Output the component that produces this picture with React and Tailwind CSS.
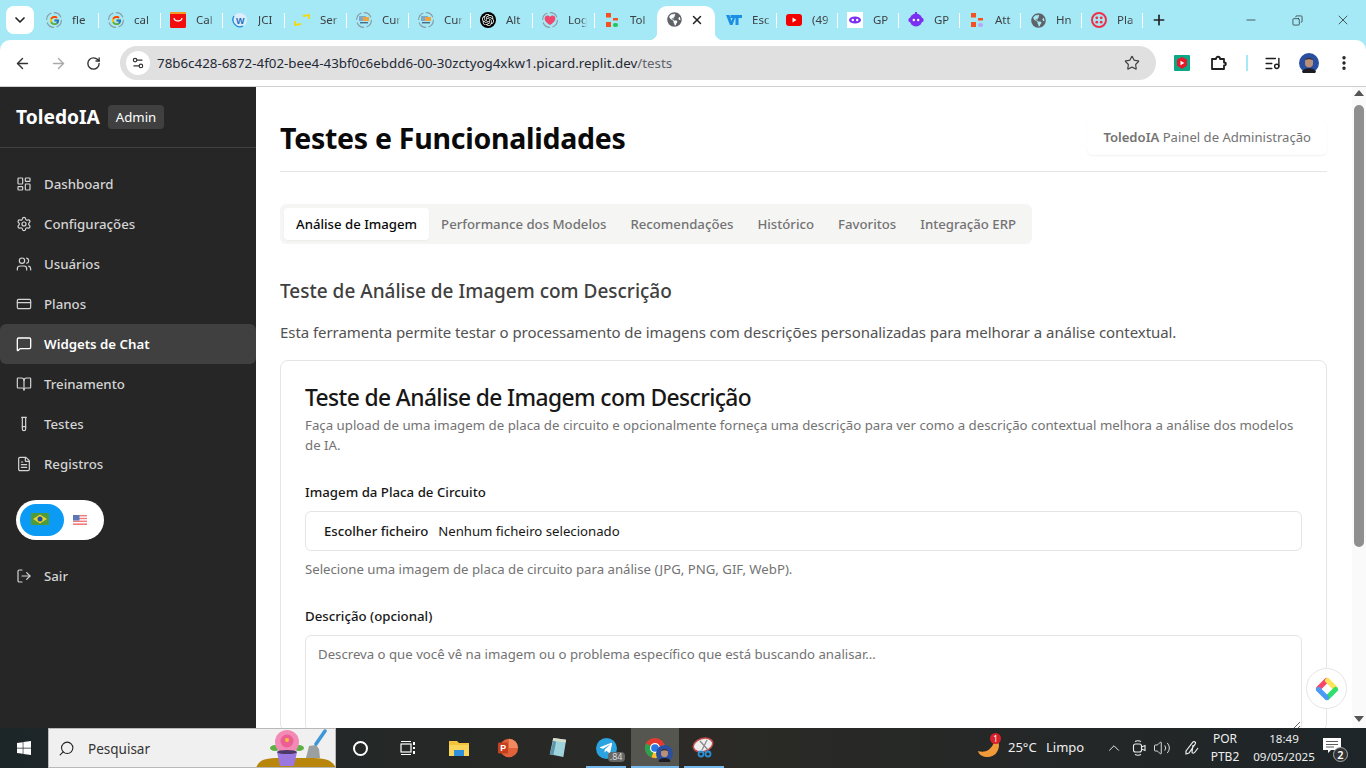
import React from "react";
import { LayoutDashboard, Settings, Users, CreditCard, MessageSquare, BookOpen, TestTube, FileText, LogOut, ArrowLeft, ArrowRight, RotateCw, Settings2, Star, ListMusic, MoreVertical, ChevronDown, X, Plus, Minus, Copy, Search, ChevronUp, Volume2 } from "lucide-react";
import { FcGoogle } from "react-icons/fc";
import { FaGlobeAmericas, FaWindows, FaTelegramPlane } from "react-icons/fa";
import { SiOpenai } from "react-icons/si";

const Ring = ({ children }) => (
  <span className="relative flex h-4 w-4 items-center justify-center">
    <svg viewBox="0 0 16 16" className="absolute inset-0 h-4 w-4"><circle cx="8" cy="8" r="7.4" fill="none" stroke="#8a9aa0" strokeWidth="1.1" strokeDasharray="9 2.5" /></svg>
    {children}
  </span>
);
const Cur = () => (
  <Ring>
    <svg viewBox="0 0 12 12" className="h-3 w-3"><rect x="1" y="2" width="7" height="5" fill="#7fa7c9" /><rect x="5" y="3" width="6" height="4" fill="#f0a23c" /><rect x="2" y="8" width="8" height="1.4" fill="#4a6a8a" /></svg>
  </Ring>
);
const Yt = () => (
  <svg viewBox="0 0 16 16" className="h-4 w-4"><rect x="0" y="2" width="16" height="12" rx="3" fill="#f40000" /><path d="M6.5 5.5v5l4-2.5z" fill="#fff" /></svg>
);
const Bot = ({ bg }) => (
  <svg viewBox="0 0 16 16" className="h-4 w-4">
    {bg ? <rect width="16" height="16" fill="#fff" /> : null}
    {bg ? <ellipse cx="8" cy="8" rx="6" ry="3.6" fill="#7b2ff2" /> : <><circle cx="8" cy="8" r="6.4" fill="#7b2ff2" /><rect x="0.5" y="6" width="15" height="4" rx="1.5" fill="#7b2ff2" /><rect x="7" y="0" width="2" height="3" fill="#7b2ff2" /></>}
    <circle cx="5.8" cy="8" r="1.2" fill="#fff" /><circle cx="10.2" cy="8" r="1.2" fill="#fff" />
  </svg>
);
const Blocks = ({ c = "#22c55e" }) => (
  <svg viewBox="0 0 16 16" className="h-4 w-4"><rect x="2" y="1" width="5" height="4.500" fill="#f4511e" /><rect x="9" y="6" width="5" height="2.500" fill="#f4511e" /><rect x="2" y="10" width="5" height="5" fill="#f4511e" /><rect x="9" y="11" width="5" height="4" rx="2" fill={c} /></svg>
);
const Globe = () => <FaGlobeAmericas className="h-[15px] w-[15px] text-[#5f6368]" />;

const tabs = [
  { t: "fle", i: <Ring><FcGoogle className="h-[11px] w-[11px]" /></Ring> },
  { t: "cal", i: <Ring><FcGoogle className="h-[11px] w-[11px]" /></Ring> },
  { t: "Cal", i: <svg viewBox="0 0 16 16" className="h-4 w-4"><rect width="16" height="16" rx="1.5" fill="#f40d0d" /><rect width="16" height="2" fill="#f59a23" /><path d="M4 6c.5 4 7.500 4 8 0" fill="none" stroke="#fff" strokeWidth="1.300" /></svg> },
  { t: "JCI", i: <svg viewBox="0 0 16 16" className="h-4 w-4"><circle cx="8" cy="8" r="7" fill="#dbeefa" /><path d="M2 4a7 7 0 0 0 9 10" fill="none" stroke="#1e88d8" strokeWidth="1.300" /><text x="4" y="12" fontSize="9" fontWeight="700" fill="#1e6fc0" fontFamily="Liberation Sans">W</text></svg> },
  { t: "Ser", i: <svg viewBox="0 0 16 16" className="h-4 w-4"><path d="M1 9v4l6-1M15 7V3L9 4" fill="none" stroke="#f5d90a" strokeWidth="1.800" /></svg> },
  { t: "Cur", i: <Cur /> },
  { t: "Cur", i: <Cur /> },
  { t: "Alt", i: <span className="flex h-4 w-4 items-center justify-center rounded-full bg-black"><SiOpenai className="h-3 w-3 text-white" /></span> },
  { t: "Log", i: <Ring><svg viewBox="0 0 12 12" className="h-3 w-3"><path d="M6 11C1 8 0 5 1 3c1-2 4-2 5 0 1-2 4-2 5 0 1 2 0 5-5 8z" fill="#f0486c" /></svg></Ring> },
  { t: "Tol", i: <Blocks />, nosep: true },
  { active: true },
  { t: "Esc", i: <svg viewBox="0 0 16 16" className="h-4 w-4"><path d="M0 3h3.500l2 6 1-3H4.500V3H16v3h-3.500v7h-3V6H9l-2.500 7H4z" fill="#1a8fe3" /></svg> },
  { t: "(49", i: <Yt /> },
  { t: "GP", i: <Bot bg /> },
  { t: "GP", i: <Bot /> },
  { t: "Att", i: <Blocks c="#b9a7f5" /> },
  { t: "Hn", i: <Globe /> },
  { t: "Pla", i: <svg viewBox="0 0 16 16" className="h-4 w-4"><circle cx="8" cy="8" r="7" fill="none" stroke="#f22f46" strokeWidth="2" /><circle cx="5.800" cy="5.800" r="1.400" fill="#f22f46" /><circle cx="10.200" cy="5.800" r="1.400" fill="#f22f46" /><circle cx="5.800" cy="10.200" r="1.400" fill="#f22f46" /><circle cx="10.200" cy="10.200" r="1.400" fill="#f22f46" /></svg> },
];

function TabStrip() {
  return (
    <div className="flex h-10 shrink-0 items-stretch bg-[#a6e9f6]">
      <div className="flex w-[37px] shrink-0 items-start pl-[6px] pt-[6px]">
        <span className="flex h-7 w-7 items-center justify-center rounded-lg bg-white"><ChevronDown className="h-4 w-4 text-[#222]" strokeWidth={2.5} /></span>
      </div>
      {tabs.map((t, i) =>
        t.active ? (
          <div key={i} className="relative mt-[6px] flex h-[34px] w-[58px] shrink-0 items-start rounded-t-[10px] bg-white pl-[10px] pt-[6px]">
            <span className="absolute bottom-0 -left-[8px] h-2 w-2 bg-[radial-gradient(circle_at_0_0,#a6e9f6_8px,#fff_8.500px)]" />
            <span className="absolute bottom-0 -right-[8px] h-2 w-2 bg-[radial-gradient(circle_at_100%_0,#a6e9f6_8px,#fff_8.500px)]" />
            <Globe />
            <X className="ml-[8px] mt-px h-[14px] w-[14px] text-[#222]" strokeWidth={2.5} />
          </div>
        ) : (
          <div key={i} className={"mt-[3px] flex h-[34px] shrink-0 items-center " + (i === 11 ? "w-[62px] pl-[11px]" : i > 11 ? "w-[61px] pl-[9px]" : "w-[62px] pl-[9px]")}>
            <span className="flex h-4 w-4 shrink-0 items-center justify-center">{t.i}</span>
            <span className="ml-[10px] w-[19px] overflow-hidden whitespace-nowrap text-[11.500px] text-[#3c4043] [mask-image:linear-gradient(90deg,#000_70%,transparent)]">{t.t}</span>
            <span className="flex-1" />
            {t.nosep ? null : <span className="h-[15px] w-[1.500px] shrink-0 bg-white" />}
          </div>
        )
      )}
      <div className="flex w-[32px] items-center justify-center"><Plus className="h-4 w-4 text-[#222]" strokeWidth={2.5} /></div>
      <div className="ml-auto flex">
        <span className="flex h-10 w-[46px] items-center justify-center"><Minus className="h-[14px] w-[14px] text-[#222]" strokeWidth={1.200} /></span>
        <span className="flex h-10 w-[46px] items-center justify-center"><Copy className="h-[11px] w-[11px] -scale-x-100 text-[#222]" strokeWidth={1.500} /></span>
        <span className="flex h-10 w-[46px] items-center justify-center"><X className="h-[16px] w-[16px] text-[#222]" strokeWidth={1.100} /></span>
      </div>
    </div>
  );
}

const Avatar = ({ size = "h-5 w-5" }) => (
  <svg viewBox="0 0 20 20" className={size}>
    <circle cx="10" cy="10" r="10" fill="#2a4fa0" />
    <path d="M6 8c0-3 8-3 8 0v3c0 2-2 3.500-4 3.500S6 13 6 11z" fill="#b98f78" />
    <path d="M6 7c1-3 7-3 8 0-2-1-6-1-8 0z" fill="#3a3230" />
    <path d="M3 19c1-5 13-5 14 0a10 10 0 0 1-14 0z" fill="#1c1c22" />
  </svg>
);

function Toolbar() {
  return (
    <div className="relative h-[47px] shrink-0 border-b border-[#d0d0d0] bg-[#a6e9f6]">
      <div className="flex h-[46px] items-center rounded-t-[10px] bg-white">
        <ArrowLeft className="ml-[14px] h-[17px] w-[17px] text-[#333]" strokeWidth={2} />
        <ArrowRight className="ml-[19px] h-[17px] w-[17px] text-[#aaa]" strokeWidth={2} />
        <RotateCw className="ml-[19px] h-[15px] w-[15px] text-[#333]" strokeWidth={2.200} />
        <div className="ml-[19px] flex h-[34px] w-[1036px] items-center rounded-full bg-[#e0e0e0] pl-[6px] pr-[16px]">
          <span className="flex h-6 w-6 items-center justify-center rounded-full bg-white"><Settings2 className="h-[14px] w-[14px] text-[#333]" /></span>
          <span className="ml-[7px] whitespace-nowrap text-[13.350px] text-[#1f2937]">78b6c428-6872-4f02-bee4-43bf0c6ebdd6-00-30zctyog4xkw1.picard.replit.dev<span className="text-[#5f6368]">/tests</span></span>
          <Star className="ml-auto h-4 w-4 text-[#444]" strokeWidth={1.800} />
        </div>
        <svg viewBox="0 0 16 16" className="ml-[18px] h-4 w-4"><rect width="16" height="16" rx="1" fill="#0aa884" /><path d="M8 2l5 2.500v6L8 14l-5-3.500v-6z" fill="#e6192b" /><path d="M6.500 5.800v4.400l3.800-2.200z" fill="#fff" /></svg>
        <svg viewBox="0 0 18 18" className="ml-[20px] h-[18px] w-[18px]" fill="none" stroke="#1f1f1f" strokeWidth="1.800" strokeLinejoin="round"><path d="M2 5h4c0-3 4-3 4 0h4v3.500c2.500 0 2.500 3 0 3V15H2z" /></svg>
        <span className="ml-[18px] h-4 w-[2px] bg-[#a6e9f6]" />
        <ListMusic className="ml-[16px] h-[17px] w-[17px] text-[#1f1f1f]" strokeWidth={2} />
        <Avatar size="ml-[18px] h-5 w-5" />
        <MoreVertical className="ml-[16px] h-[18px] w-[18px] text-[#1f1f1f]" strokeWidth={2.500} />
      </div>
    </div>
  );
}

const nav = [
  [LayoutDashboard, "Dashboard"],
  [Settings, "Configurações"],
  [Users, "Usuários"],
  [CreditCard, "Planos"],
  [MessageSquare, "Widgets de Chat", true],
  [BookOpen, "Treinamento"],
  [TestTube, "Testes"],
  [FileText, "Registros"],
];

function Sidebar() {
  return (
    <aside className="flex w-64 shrink-0 flex-col bg-[#262626]">
      <div className="flex h-[61px] items-center gap-2 border-b border-[#404040] px-4">
        <span className="pt-px text-[19.200px] font-bold text-white">ToledoIA</span>
        <span className="rounded bg-[#404040] px-2 pb-[1px] pt-[3px] text-[13.200px] text-white">Admin</span>
      </div>
      <nav className="mt-4 flex flex-col">
        {nav.map(([I, label, active]) => (
          <div key={label} className={"flex h-10 items-center gap-3 rounded-md px-4 text-[13.250px] " + (active ? "bg-[#404040] font-semibold text-white" : "font-medium text-[#d4d4d4]")}>
            <I className="h-4 w-4 shrink-0" strokeWidth={active ? 2 : 1.800} />
            <span className="pt-[2px]">{label}</span>
          </div>
        ))}
      </nav>
      <div className="ml-4 mt-4 flex h-10 w-[88px] items-center rounded-full bg-white p-1">
        <span className="flex h-8 w-11 items-center justify-center rounded-full bg-[#0b9bf5]">
          <svg viewBox="0 0 18 12" className="-ml-[4px] -mt-[3px] h-3 w-[18px]"><rect width="18" height="12" fill="#4f9a3a" /><path d="M9 1.500L16 6l-7 4.500L2 6z" fill="#e5d22f" /><circle cx="9" cy="6" r="2.500" fill="#23509f" /></svg>
        </span>
        <svg viewBox="0 0 14 10" className="-mt-[1px] ml-[9px] h-[10px] w-[14px]">
          <rect width="14" height="10" fill="#fff" />
          <rect y="0" width="14" height="1.400" fill="#f27a7a" /><rect y="2.800" width="14" height="1.400" fill="#f27a7a" /><rect y="5.600" width="14" height="1.400" fill="#f27a7a" /><rect y="8.400" width="14" height="1.600" fill="#f27a7a" />
          <rect width="6.500" height="5.500" fill="#5a78b5" />
        </svg>
      </div>
      <div className="mt-4 flex h-10 items-center gap-3 px-4 text-[13.250px] font-medium text-[#d4d4d4]">
        <LogOut className="h-4 w-4" strokeWidth={1.800} />
        <span className="pt-[2px]">Sair</span>
      </div>
    </aside>
  );
}

function Main() {
  const tabItems = ["Performance dos Modelos", "Recomendações", "Histórico", "Favoritos", "Integração ERP"];
  return (
    <main className="relative min-w-0 flex-1 overflow-hidden bg-white pl-6 pr-[25px] pt-[33px]">
      <header className="flex items-start justify-between border-b border-[#e5e5e5] pb-[15px]">
        <h1 className="text-[28.500px] font-bold leading-9 tracking-[-0.27px] text-[#0a0a0a]">Testes e Funcionalidades</h1>
        <div className="flex h-[35px] items-center rounded-md bg-white px-4 text-[13.100px] text-[#737373] shadow-[0_1px_2px_rgba(0,0,0,0.06)]">
          <span className="font-semibold">ToledoIA</span>&nbsp;Painel de Administração
        </div>
      </header>
      <div className="mt-8 inline-flex h-10 items-center rounded-md bg-[#f5f5f4] p-1 text-[13.200px] font-medium">
        <span className="flex h-8 items-center rounded bg-white px-3 pt-[2px] text-[#0a0a0a] shadow-[0_1px_2px_rgba(0,0,0,0.04)]">Análise de Imagem</span>
        {tabItems.map((t) => <span key={t} className="flex h-8 items-center px-3 pt-[2px] text-[#737373]">{t}</span>)}
      </div>
      <h2 className="mt-[33px] text-[19px] font-medium leading-7 text-[#404040]">Teste de Análise de Imagem com Descrição</h2>
      <p className="mt-[15px] text-[15px] leading-6 tracking-[-0.06px] text-[#525252]">Esta ferramenta permite testar o processamento de imagens com descrições personalizadas para melhorar a análise contextual.</p>
      <section className="mt-4 rounded-lg border border-[#e5e5e5] px-6 pt-[21px]">
        <h3 className="text-[22.800px] font-medium leading-8 tracking-[-0.6px] text-[#171717]">Teste de Análise de Imagem com Descrição</h3>
        <p className="mt-px text-[13.250px] leading-5 text-[#737373]">Faça upload de uma imagem de placa de circuito e opcionalmente forneça uma descrição para ver como a descrição contextual melhora a análise dos modelos de IA.</p>
        <label className="mt-[27px] block text-[13.250px] font-medium leading-5 text-[#171717]">Imagem da Placa de Circuito</label>
        <div className="mt-[9px] flex h-10 items-center rounded-md border border-[#e5e5e5] pl-[18px] pt-[2px] text-[13.200px] text-[#171717]">
          <span className="font-medium">Escolher ficheiro</span>
          <span className="ml-[10px]">Nenhum ficheiro selecionado</span>
        </div>
        <p className="mt-2 text-[13.200px] leading-5 text-[#737373]">Selecione uma imagem de placa de circuito para análise (JPG, PNG, GIF, WebP).</p>
        <label className="mt-[27px] block text-[13.250px] font-medium leading-5 text-[#171717]">Descrição (opcional)</label>
        <textarea className="mt-[9px] block h-24 w-full rounded-md border border-[#e5e5e5] px-3 py-2 text-[13.200px] leading-5 outline-none placeholder:text-[#737373]" placeholder="Descreva o que você vê na imagem ou o problema específico que está buscando analisar..." />
      </section>
      <div className="absolute left-[1050px] top-[581px] flex h-[41px] w-[41px] items-center justify-center rounded-full border border-[#e5e5e5] bg-white">
        <svg viewBox="0 0 24 24" className="h-6 w-6">
          <path d="M12 4L4 12" stroke="#f5476b" strokeWidth="5" strokeLinecap="round" transform="translate(-0.500 -0.500)" />
          <path d="M12 4L20 12" stroke="#fbe35a" strokeWidth="5" strokeLinecap="round" transform="translate(0.500 -0.500)" />
          <path d="M20 12L12 20" stroke="#2ee06a" strokeWidth="5" strokeLinecap="round" transform="translate(0.500 0.500)" />
          <path d="M4 12L12 20" stroke="#4a9bf5" strokeWidth="5" strokeLinecap="round" transform="translate(-0.500 0.500)" />
        </svg>
      </div>
    </main>
  );
}

function Scrollbar() {
  return (
    <div className="flex w-[14px] shrink-0 flex-col items-center bg-[#fafafa]">
      <span className="mt-[3px] h-0 w-0 border-x-[5px] border-b-[6px] border-x-transparent border-b-[#555]" />
      <span className="mt-[9px] h-[442px] w-[10px] rounded-full bg-[#8f8f8f]" />
      <span className="mb-[6px] mt-auto h-0 w-0 border-x-[5px] border-t-[6px] border-x-transparent border-t-[#555]" />
    </div>
  );
}

const Cell = ({ children, on, active }) => (
  <div className={"relative flex h-10 w-12 items-center justify-center " + (active ? "bg-[#55564f]" : "")}>
    {children}
    {on ? <span className={"absolute bottom-0 h-[2px] bg-[#76b9ed] " + (active ? "inset-x-0" : "inset-x-1")} /> : null}
  </div>
);

function Taskbar() {
  return (
    <div className="flex h-10 shrink-0 items-center bg-gradient-to-r from-[#1c2528] via-[#2b2a26] to-[#1e2528] text-[#eeeeee]">
      <div className="flex h-10 w-12 items-center justify-center"><FaWindows className="h-4 w-4 text-white" /></div>
      <div className="relative flex h-10 w-[288px] items-center overflow-hidden border border-[#b8b8b8] bg-[#f0f0f0] pl-[9px] text-[13.500px] text-[#333]">
        <Search className="h-[17px] w-[17px] -scale-x-100 text-[#222]" strokeWidth={1.500} />
        <span className="ml-[13px] pt-[2px]">Pesquisar</span>
        <svg viewBox="0 0 80 40" className="absolute -bottom-px -right-px h-10 w-20">
          <path d="M0 40c3-8 8-10 24-10h30c16 0 22 2 26 10z" fill="#b8860b" />
          <ellipse cx="19" cy="20" rx="5" ry="3" fill="#5fb044" />
          <ellipse cx="43" cy="20" rx="5" ry="3" fill="#5fb044" />
          <path d="M50 30l3-12 7-1 3 4 1 9z" fill="#9aa0a0" />
          <path d="M60 16l9-13" stroke="#3c96d8" strokeWidth="3.500" strokeLinecap="round" />
          <circle cx="31" cy="14" r="12" fill="#f28ab5" />
          <circle cx="31" cy="13" r="6.500" fill="#ec5f95" />
          <circle cx="31" cy="12" r="2" fill="#f2c13c" />
          <path d="M21 24h20l-3 14H24z" fill="#9a78e0" />
          <ellipse cx="31" cy="24" rx="10" ry="2" fill="#4b3a68" />
        </svg>
      </div>
      <Cell><span className="h-[15px] w-[15px] rounded-full border-[2.500px] border-white" /></Cell>
      <Cell>
        <svg viewBox="0 0 16 16" className="h-4 w-4" fill="none" stroke="#fff" strokeWidth="1.200"><rect x="1" y="4" width="10" height="8" /><path d="M1 1.500h10M1 14.500h10" /><path d="M14 2v3M14 7v2M14 11v3" strokeWidth="2" /></svg>
      </Cell>
      <div className="ml-[3px] flex items-center gap-px">
        <Cell>
          <svg viewBox="0 0 20 18" className="h-[18px] w-5"><path d="M0 2h8l2 2h10v13H0z" fill="#f3c33c" /><rect y="6" width="20" height="11" fill="#fad55c" /><rect x="5" y="11" width="10" height="6" fill="#2f8fdc" /></svg>
        </Cell>
        <Cell>
          <svg viewBox="0 0 24 24" className="h-[22px] w-[22px]"><circle cx="13" cy="12" r="10" fill="#e0613a" /><path d="M13 2a10 10 0 0 1 10 10H13z" fill="#f08a60" /><rect x="1" y="6" width="11" height="12" rx="1.500" fill="#c4401f" /><text x="3.500" y="15.500" fontSize="9.500" fontWeight="700" fill="#fff" fontFamily="Liberation Sans">P</text></svg>
        </Cell>
        <Cell>
          <svg viewBox="0 0 22 24" className="h-[22px] w-5"><path d="M7 1l14 2-3 19-15-3z" fill="#9fd4dc" /><path d="M7 1l14 2-.500 3L6 4z" fill="#d8dcc8" /><path d="M3 19L7 4l3 1-3 15z" fill="#5d96a8" /></svg>
        </Cell>
        <Cell on>
          <span className="relative flex h-[21px] w-[21px] items-center justify-center rounded-full bg-[#2aa3e0]">
            <FaTelegramPlane className="h-[14px] w-[14px] text-white" />
            <span className="absolute -bottom-[3px] -right-[8px] rounded-sm bg-[#666] px-[2px] text-[9px] leading-[10px] text-[#ddd]">.84</span>
          </span>
        </Cell>
        <Cell on active>
          <span className="relative h-[22px] w-[22px]">
            <svg viewBox="0 0 24 24" className="h-[22px] w-[22px]">
              <circle cx="12" cy="12" r="11" fill="#e53a2f" />
              <path d="M12 12L22.500 8.500A11 11 0 0 1 8 22.200z" fill="#fbc02d" />
              <path d="M12 12L8 22.200A11 11 0 0 1 2.200 7z" fill="#2ba24c" />
              <circle cx="12" cy="12" r="5.500" fill="#fff" /><circle cx="12" cy="12" r="4.200" fill="#2b78e4" />
            </svg>
            <Avatar size="absolute -bottom-[3px] -right-[7px] h-[17px] w-[17px]" />
          </span>
        </Cell>
        <Cell on>
          <svg viewBox="0 0 24 24" className="h-[24px] w-[24px]" fill="none"><ellipse cx="11" cy="9" rx="10" ry="6.500" fill="#eee" stroke="#c04a4a" strokeWidth="1.500" transform="rotate(-18 11 9)" /><path d="M8 5l8 9M15 4l-5 10" stroke="#888" strokeWidth="1.200" /><circle cx="9" cy="18" r="2.500" stroke="#2d8fd5" strokeWidth="1.800" /><circle cx="16" cy="18" r="2.500" stroke="#2d8fd5" strokeWidth="1.800" /></svg>
        </Cell>
      </div>
      <div className="ml-auto flex items-center text-[13px]">
        <span className="relative h-5 w-[23px]">
          <svg viewBox="0 0 23 20" className="h-5 w-[23px]"><path d="M1 13c6 2 13 0 16-9 3-1 5 0 5 3 0 7-5 12-11 12-5 0-9-2-10-6z" fill="#f09a3a" /></svg>
          <span className="absolute -right-[1px] -top-[5px] flex h-[11px] w-[11px] items-center justify-center rounded-full bg-[#d6202a] text-[8px] leading-none text-white">1</span>
        </span>
        <span className="ml-[8px] w-[29px] whitespace-nowrap">25°C</span>
        <span className="ml-[9px] w-[38px]">Limpo</span>
        <ChevronUp className="ml-[21px] h-[18px] w-[18px]" strokeWidth={1.300} />
        <svg viewBox="0 0 14 16" className="ml-[9px] h-4 w-[14px]" fill="none" stroke="#eee" strokeWidth="1.100"><rect x="1.500" y="4" width="8" height="8" rx="2" /><path d="M9.500 7l3.500-1.500v5L9.500 9M3 1.500c2-1 4-1 6 0M3 14.500c2 1 4 1 6 0" /></svg>
        <Volume2 className="ml-[7px] h-[18px] w-[18px]" strokeWidth={1.200} />
        <svg viewBox="0 0 18 18" className="ml-[11px] h-[18px] w-[18px]" fill="none" stroke="#eee" strokeWidth="1.200"><path d="M4 12l7-9c1-1 3 0 2.500 1.500L7 14l-3 1zM11 6l-1 7c0 1.500 2 1.500 3 0l3-4" /></svg>
        <div className="ml-[9px] flex w-[32px] flex-col items-center text-[12px] leading-[18px]"><span>POR</span><span>PTB2</span></div>
        <div className="ml-[11px] flex w-[64px] flex-col items-center text-[11.600px] leading-[18px]"><span>18:49</span><span>09/05/2025</span></div>
        <div className="relative ml-[5px] mr-[21px] h-6 w-6">
          <svg viewBox="0 0 18 16" className="absolute left-[2px] top-[2px] h-4 w-[18px]"><path d="M0 0h18v12H8l-3 3v-3H0z" fill="#fff" /><path d="M3 3.500h12M3 6.500h12M3 9h8" stroke="#333" strokeWidth="0.800" /></svg>
          <span className="absolute -bottom-[2px] right-[-3px] flex h-[15px] w-[15px] items-center justify-center rounded-full border border-[#aaa] bg-[#333] text-[11px] font-semibold leading-none text-white">2</span>
        </div>
      </div>
    </div>
  );
}

export default function App() {
  return (
    <div className="flex h-screen w-screen flex-col overflow-hidden font-[family-name:'Noto_Sans',sans-serif]">
      <TabStrip />
      <Toolbar />
      <div className="flex min-h-0 flex-1">
        <Sidebar />
        <Main />
        <Scrollbar />
      </div>
      <Taskbar />
    </div>
  );
}
